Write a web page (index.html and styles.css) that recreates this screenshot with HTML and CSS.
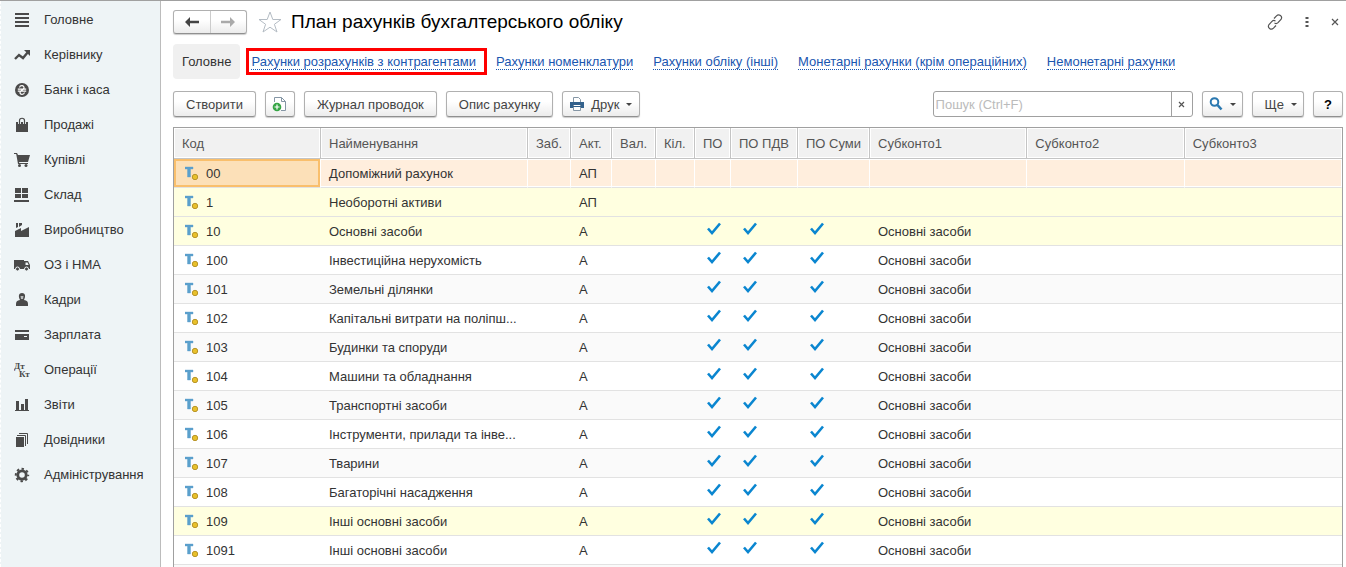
FILE: index.html
```html
<!DOCTYPE html>
<html lang="uk">
  <head>
    <meta charset="UTF-8" />
    <meta name="viewport" content="width=device-width, initial-scale=1.0" />
    <title>План рахунків бухгалтерського обліку</title>
    <link rel="stylesheet" href="styles.css">
  </head>

  <body>
    <svg class="symbols" aria-hidden="true">
      <symbol id="account" viewBox="0 0 14 14">
        <path d="M0 1h8v2H5.500v8h-3V3H0z" fill="#5aa0cc" stroke="#5aa0cc" stroke-width=".4" />
        <circle cx="10" cy="11" r="2.700" fill="#e8c02a" stroke="#b8952a" />
      </symbol>
      <symbol id="tick" viewBox="0 0 14 13">
        <path d="M1 6.500l4 4.500 8-9.500" fill="none" stroke="#0a86d0" stroke-width="2.600" />
      </symbol>
    </svg>

    <nav class="sidebar">
      <a href="#">
        <svg viewBox="0 0 16 16"><path d="M1 1h14v2H1zM1 5h14v2H1zM1 9h14v2H1zM1 13h14v2H1z" /></svg>
        Головне
      </a>
      <a href="#">
        <svg viewBox="0 0 16 16"><path d="M1 12l4-4 4 3 5-6" fill="none" stroke="#4a4a4a" stroke-width="2.400" /><path d="M10 3h6v6z" /></svg>
        Керівнику
      </a>
      <a href="#">
        <svg viewBox="0 0 16 16"><circle cx="8" cy="8" r="7" /><path d="M5.500 5.500C6 3 10.500 3 10 6 9.500 8 6 8 6 10.500c0 2.500 4 2.500 4.500 0M3.800 7.200h8.400M3.800 9.200h8.400" fill="none" stroke="#fff" stroke-width="1.200" /></svg>
        Банк і каса
      </a>
      <a href="#">
        <svg viewBox="0 0 16 16"><path d="M2 5h12v10H2z" /><path d="M5.500 7V3.500c0-3 5-3 5 0V7" fill="none" stroke="#eef4f6" stroke-width="3" /><path d="M5.500 7V3.500c0-3 5-3 5 0V7" fill="none" stroke="#4a4a4a" stroke-width="1.200" /></svg>
        Продажі
      </a>
      <a href="#">
        <svg viewBox="0 0 16 16"><path d="M0 1h3l1 2h12l-2 7H5l.3 1H14v1H4L2.200 2H0z" /><circle cx="5.500" cy="13.500" r="1.500" /><circle cx="12" cy="13.500" r="1.500" /></svg>
        Купівлі
      </a>
      <a href="#">
        <svg viewBox="0 0 16 16"><path d="M1 1h6v5H1zM8 1h6v5H8zM1 7h6v4H1zM8 7h6v4H8zM0 13h15v2H0z" /></svg>
        Склад
      </a>
      <a href="#">
        <svg viewBox="0 0 16 16"><path d="M1 15V9l6-3v3l8-4v10zM2 1h2v4L2 6zM5 1h3v2L5 5z" /></svg>
        Виробництво
      </a>
      <a href="#">
        <svg viewBox="0 0 16 16"><path d="M0 3h10v9H0zM10 4h4l2 4v4h-6z" /><path d="M11.500 5.500h2l1.200 2.500h-3.200z" fill="#eef4f6" /><g stroke="#eef4f6"><circle cx="3.500" cy="12" r="2" /><circle cx="12.500" cy="12" r="2" /></g></svg>
        ОЗ і НМА
      </a>
      <a href="#">
        <svg viewBox="0 0 16 16"><path d="M8 1c4 0 3.500 4 2 7 3 .5 4 1.500 4 4v2H2v-2c0-2.500 1-3.500 4-4C4.500 5 4 1 8 1z" /><path d="M6.500 4h3L9 7H7z" fill="#b9bcbd" /></svg>
        Кадри
      </a>
      <a href="#">
        <svg viewBox="0 0 16 16"><path d="M1 3h14v2H1zM1 7h14v6H1z" /><path d="M10 9.500h3" stroke="#eef4f6" /></svg>
        Зарплата
      </a>
      <a href="#">
        <svg viewBox="0 0 16 16"><g font-family="Liberation Serif, serif" font-weight="bold" font-size="9"><text x="0" y="7">Дт</text><text x="5" y="15">Кт</text></g></svg>
        Операції
      </a>
      <a href="#">
        <svg viewBox="0 0 16 16"><path d="M1 13h14v1H1zM2 4h3v9H2zM7 7h3v6H7zM11 2h3v11h-3z" /></svg>
        Звіти
      </a>
      <a href="#">
        <svg viewBox="0 0 16 16"><path d="M2 5h8v10H2z" /><path d="M3 3.500h8.500V14M5 1.500h8.500V12" fill="none" stroke="#4a4a4a" /></svg>
        Довідники
      </a>
      <a href="#">
        <svg viewBox="0 0 16 16"><circle cx="8" cy="8" r="4.200" fill="none" stroke="#4a4a4a" stroke-width="2.800" /><circle cx="8" cy="8" r="6.200" fill="none" stroke="#4a4a4a" stroke-width="2" stroke-dasharray="2.435" stroke-dashoffset="1.200" /></svg>
        Адміністрування
      </a>
    </nav>

    <main>
      <header class="title-bar">
        <div class="history">
          <button aria-label="Назад"><svg width="16" height="12" viewBox="0 0 16 12"><path d="M1 6l5-5v3.700h9v2.600H6V11z" fill="#444" /></svg></button>
          <button aria-label="Вперед"><svg width="16" height="12" viewBox="0 0 16 12"><path d="M15 6l-5-5v3.700H1v2.600h9V11z" fill="#aaa" /></svg></button>
        </div>
        <button class="plain" aria-label="Обране"><svg width="24" height="22" viewBox="0 0 24 22"><path d="M12 1l2.800 7.500H23l-6.600 4.800L19 21l-7-4.800L5 21l2.600-7.700L1 8.500h8.200z" fill="none" stroke="#b4bcc4" /></svg></button>
        <h1>План рахунків бухгалтерського обліку</h1>
        <div class="window-tools">
          <button class="plain" aria-label="Посилання"><svg width="16" height="16" viewBox="0 0 16 16"><g fill="none" stroke="#555" stroke-width="1.200"><path d="M7 4.500l2.500-2.700c2.500-2.500 6.500.5 4.500 3.700l-3 3.200c-1 1-2.500 1-3.500.2" /><path d="M9 11.500l-2.500 2.700C4 16.700 0 13.700 2 10.500l3-3.200c1-1 2.500-1 3.500-.2" /></g></svg></button>
          <button class="plain" aria-label="Дії"><svg width="4" height="12" viewBox="0 0 4 12"><path d="M.5 1h3v2h-3zM.5 5h3v2h-3zM.5 9h3v2h-3z" fill="#555" /></svg></button>
          <button class="plain" aria-label="Закрити"><svg width="8" height="8" viewBox="0 0 8 8"><path d="M1 1l6 6M7 1L1 7" stroke="#555" stroke-width="1.200" /></svg></button>
        </div>
      </header>

      <nav class="tabs">
        <a class="current" href="#">Головне</a>
        <a class="marked" href="#"><span>Рахунки розрахунків з контрагентами</span></a>
        <a href="#"><span>Рахунки номенклатури</span></a>
        <a href="#"><span>Рахунки обліку (інші)</span></a>
        <a href="#"><span>Монетарні рахунки (крім операційних)</span></a>
        <a href="#"><span>Немонетарні рахунки</span></a>
      </nav>

      <div class="toolbar">
        <button>Створити</button>
        <button class="icon-button" aria-label="Створити копіюванням"><svg width="16" height="16" viewBox="0 0 16 16"><path d="M2.500 6V1.500h7l4 4v9H9M9.500 1.500v4h4" fill="#fff" stroke="#8596a5" /><circle cx="5" cy="11" r="4.300" fill="#35a545" /><path d="M2.500 11h5M5 8.500v5" stroke="#fff" stroke-width="1.200" /></svg></button>
        <button>Журнал проводок</button>
        <button>Опис рахунку</button>
        <button class="menu print"><svg width="14" height="14" viewBox="0 0 14 14"><path d="M3.500 5V.5h5l2 2V5M3.500 8v5.500h7V8" fill="#fff" stroke="#8596a5" /><path d="M0 5h14v6h-3V8H3v3H0z" fill="#33618c" /><path d="M2 9.500h10" stroke="#33618c" /></svg>Друк<i class="arrow"></i></button>
        <div class="search">
          <input type="text" placeholder="Пошук (Ctrl+F)" aria-label="Пошук" />
          <button aria-label="Очистити"><svg width="7" height="7" viewBox="0 0 7 7"><path d="M1 1l5 5M6 1L1 6" stroke="#555" stroke-width="1.200" /></svg></button>
        </div>
        <button class="menu" aria-label="Знайти"><svg width="14" height="14" viewBox="0 0 14 14"><circle cx="5.500" cy="5" r="3.800" fill="none" stroke="#2a78b0" stroke-width="2" /><path d="M8.500 8l4 4.500" stroke="#2a78b0" stroke-width="2.600" /></svg><i class="arrow"></i></button>
        <button class="menu more">Ще<i class="arrow"></i></button>
        <button class="help">?</button>
      </div>

      <div class="list">
        <table>
          <colgroup>
            <col class="c-code" /><col class="c-name" /><col class="c-off" /><col class="c-act" />
            <col class="c-cur" /><col class="c-qty" /><col class="c-po" /><col class="c-vat" />
            <col class="c-sum" /><col /><col /><col />
          </colgroup>
          <thead>
            <tr>
              <th>Код</th><th>Найменування</th><th>Заб.</th><th>Акт.</th><th>Вал.</th><th>Кіл.</th>
              <th>ПО</th><th>ПО ПДВ</th><th>ПО Суми</th><th>Субконто1</th><th>Субконто2</th><th>Субконто3</th>
            </tr>
          </thead>
          <tbody></tbody>
        </table>
      </div>
    </main>

    <script>
      const accounts = [
        { code: "00", name: "Допоміжний рахунок", act: "АП", cls: "selected" },
        { code: "1", name: "Необоротні активи", act: "АП", cls: "group" },
        { code: "10", name: "Основні засоби", act: "А", cls: "group", sub: "Основні засоби" },
        { code: "100", name: "Інвестиційна нерухомість", act: "А", sub: "Основні засоби" },
        { code: "101", name: "Земельні ділянки", act: "А", sub: "Основні засоби" },
        { code: "102", name: "Капітальні витрати на поліпш...", act: "А", sub: "Основні засоби" },
        { code: "103", name: "Будинки та споруди", act: "А", sub: "Основні засоби" },
        { code: "104", name: "Машини та обладнання", act: "А", sub: "Основні засоби" },
        { code: "105", name: "Транспортні засоби", act: "А", sub: "Основні засоби" },
        { code: "106", name: "Інструменти, прилади та інве...", act: "А", sub: "Основні засоби" },
        { code: "107", name: "Тварини", act: "А", sub: "Основні засоби" },
        { code: "108", name: "Багаторічні насадження", act: "А", sub: "Основні засоби" },
        { code: "109", name: "Інші основні засоби", act: "А", cls: "group", sub: "Основні засоби" },
        { code: "1091", name: "Інші основні засоби", act: "А", sub: "Основні засоби" },
      ];

      let rows = "";
      for (let a of accounts) {
        const tick = a.sub ? `<svg class="tick"><use href="#tick" /></svg>` : "";
        rows += `
          <tr class="${a.cls || ""}">
            <td><div class="code"><svg><use href="#account" /></svg>${a.code}</div></td>
            <td>${a.name}</td><td></td><td>${a.act}</td><td></td><td></td>
            <td>${tick}</td><td>${tick}</td><td>${tick}</td>
            <td>${a.sub || ""}</td><td></td><td></td>
          </tr>`;
      }
      document.querySelector("tbody").innerHTML = rows;
    </script>
  </body>
</html>
```
FILE: styles.css
```css
* {
  box-sizing: border-box;
}

body {
  margin: 0;
  height: 100vh;
  overflow: hidden;
  display: flex;
  border-top: 1px solid #a0a0a0;
  background-color: #fff;
  color: #333;
  font-family: "Liberation Sans", Arial, sans-serif;
  font-size: 13px;
}

button,
input {
  font: inherit;
  color: #444;
}

svg {
  flex: none;
}

.symbols {
  position: absolute;
  width: 0;
  height: 0;
}

.sidebar {
  flex: none;
  width: 161px;
  padding-top: 1px;
  background-color: #eef4f6;
  border-left: 1px dashed #fff;
  border-right: 1px solid #bcbcbc;
}

.sidebar a {
  display: flex;
  align-items: center;
  gap: 14px;
  height: 35px;
  padding-left: 13px;
  color: #333;
  text-decoration: none;
}

.sidebar svg {
  width: 16px;
  height: 16px;
  fill: #4a4a4a;
}

main {
  flex: 1;
  min-width: 0;
  display: flex;
  flex-direction: column;
  padding: 8px 3px 0 12px;
}

.title-bar {
  display: flex;
  align-items: center;
  height: 25px;
}

.history,
.toolbar > button {
  border: 1px solid #b0b0b0;
  border-bottom-color: #909090;
  border-radius: 3px;
  background: linear-gradient(#fff 40%, #ececec);
  box-shadow: 0 1px 1px #ccc;
}

.history {
  display: flex;
  width: 74px;
  height: 24px;
  margin-right: 11px;
}

.history button {
  flex: 1;
  display: flex;
  align-items: center;
  justify-content: center;
  padding: 0;
  border: none;
  background: none;
}

.history button + button {
  border-left: 1px solid #ccc;
}

.plain {
  display: flex;
  padding: 0;
  border: none;
  background: none;
}

h1 {
  margin: 0 0 0 9px;
  color: #000;
  font-size: 19px;
  font-weight: normal;
}

.window-tools {
  display: flex;
  align-items: center;
  gap: 22px;
  margin-left: auto;
  padding-right: 4px;
}

.tabs {
  display: flex;
  align-items: center;
  gap: 20px;
  height: 34px;
  margin: 10px 0 13px;
  white-space: nowrap;
}

.tabs a {
  color: #1a56b0;
  text-decoration: none;
}

.tabs span {
  border-bottom: 1px dotted #1a56b0;
}

.tabs .current {
  padding: 10px 9px;
  border-radius: 4px;
  background-color: #f0f0f0;
  color: #333;
}

.tabs .marked {
  margin: 0 -11px 0 -14px;
  padding: 3px 8px 3px 2px;
  border: 3px solid #f00;
}

.toolbar {
  display: flex;
  gap: 9px;
  margin-bottom: 10px;
}

.toolbar > button {
  display: flex;
  align-items: center;
  justify-content: center;
  height: 26px;
  padding: 0 12px;
}

.toolbar .icon-button {
  width: 30px;
  padding: 0;
}

.toolbar .menu {
  gap: 7px;
  padding: 0 6px;
}

.toolbar .print {
  padding: 0 7px;
}

.toolbar .more {
  padding-left: 12px;
}

.toolbar .help {
  width: 30px;
  padding: 0;
  color: #000;
  font-weight: bold;
}

.arrow {
  border: 3px solid transparent;
  border-top-color: #444;
  border-bottom: none;
}

.search {
  display: flex;
  width: 260px;
  height: 26px;
  margin-left: auto;
  border: 1px solid #a0a0a0;
  border-radius: 3px;
}

.search input {
  flex: 1;
  min-width: 0;
  padding: 0 2px;
  border: none;
  background: none;
}

.search input::placeholder {
  color: #bbb;
}

.search button {
  display: flex;
  align-items: center;
  justify-content: center;
  width: 21px;
  padding: 0;
  border: none;
  border-left: 1px solid #a0a0a0;
  background: none;
}

.list {
  flex: 1;
  min-height: 0;
  overflow: hidden;
  border: 1px solid #a0a0a0;
  border-bottom: none;
  background-color: #fafafa;
}

table {
  width: 100%;
  table-layout: fixed;
  border-collapse: separate;
  border-spacing: 0;
}

.c-code { width: 147px; }
.c-name { width: 207px; }
.c-off { width: 43px; }
.c-act { width: 41px; }
.c-cur { width: 44px; }
.c-qty { width: 39px; }
.c-po { width: 36px; }
.c-vat { width: 67px; }
.c-sum { width: 72px; }

th,
td {
  padding: 0 0 0 8px;
  text-align: left;
  white-space: nowrap;
}

th {
  height: 31px;
  border-right: 1px solid #c4c4c4;
  border-bottom: 1px solid #c4c4c4;
  background-color: #f1f1f1;
  box-shadow: inset 0 0 0 1px #fff;
  color: #555;
  font-weight: normal;
}

td {
  height: 29px;
  border-bottom: 1px solid #e2e2e2;
}

th:last-child {
  border-right: none;
}

tbody tr {
  background-color: #fff;
}

tbody tr:nth-child(odd) {
  background-color: #fafafa;
}

tbody .group.group {
  background-color: #ffffe0;
}

tbody .selected.selected {
  background-color: #ffeedd;
}

.selected td {
  border-right: 1px solid #fff;
  box-shadow: inset 0 1px #fff, inset 0 -1px #fff;
}

.selected td:first-child {
  background-color: #fce0b8;
  box-shadow: inset 0 0 0 2px #f9bf6c;
}

.code {
  display: flex;
  align-items: center;
  gap: 7px;
  padding-left: 3px;
}

.code svg {
  width: 14px;
  height: 14px;
}

.tick {
  display: block;
  width: 14px;
  height: 13px;
  margin: 0 0 5px 4px;
}
```
